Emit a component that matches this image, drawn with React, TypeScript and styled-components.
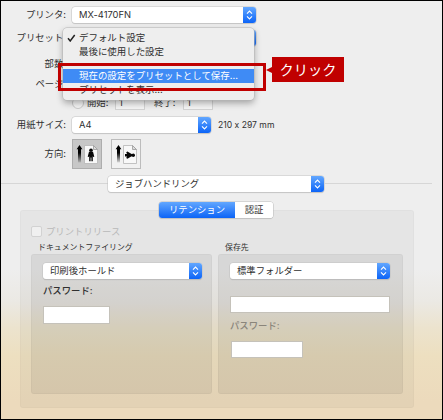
import React from "react";
import styled, { createGlobalStyle } from "styled-components";

const GlobalStyle = createGlobalStyle`
  * { box-sizing: border-box; }
  body { margin: 0; font-family: Inter, "Noto Sans CJK JP", sans-serif; font-size: 9.35px; line-height: 14px; font-feature-settings: "calt" 0; color: #303030; }
`;

const Frame = styled.main`
  position: relative;
  width: 443px;
  height: 420px;
  border: 1px solid #000;
  overflow: hidden;
  background: linear-gradient(#eeeeee 0, #eeeeee 268px, #ebe9e4 300px, #ece3cd 328px, #eddfc0 355px, #ecdabc 400px);
`;

const Form = styled.section`
  display: grid;
  grid-template-columns: 65px 1fr;
  column-gap: 6px;
  grid-template-rows: 28px 18px 34px 6px 31px 13px 46px;
  align-items: center;
  height: 174px;
`;

const Label = styled.span`
  display: block;
  text-align: right;
  white-space: nowrap;
`;

const Line = styled.div<{ $gap?: number }>`
  display: flex;
  align-items: center;
  gap: ${(p) => p.$gap ?? 0}px;
  white-space: nowrap;
`;

const SelectBox = styled.div<{ $w: number }>`
  display: flex;
  flex: none;
  align-items: stretch;
  width: ${(p) => p.$w}px;
  height: 16px;
  border-radius: 3px;
  background: #fff;
  box-shadow: 0 0 0 0.5px #c4c4c4, 0 1px 1px #0000002b;
  overflow: hidden;
`;

const SelectText = styled.span`
  flex: 1;
  padding-left: 7px;
  line-height: 16px;
  white-space: nowrap;
`;

const Stepper = styled.span`
  display: flex;
  align-items: center;
  justify-content: center;
  width: 13px;
  background: linear-gradient(#62a7ff, #0c64f7);
`;

const SelectField = ({ width, children }: { width: number; children?: React.ReactNode }) => (
  <SelectBox $w={width}>
    <SelectText>{children}</SelectText>
    <Stepper>
      <svg width="7" height="10" viewBox="0 0 7 10" fill="none" stroke="#fff" strokeWidth="1.1">
        <path d="M1 3.6 3.5 1 6 3.6M1 6.4 3.5 9 6 6.4" />
      </svg>
    </Stepper>
  </SelectBox>
);

const Input = styled.div<{ $w: number; $h: number }>`
  flex: none;
  width: ${(p) => p.$w}px;
  height: ${(p) => p.$h}px;
  padding-left: 3px;
  border: 1px solid #c5c2ba;
  background: #fff;
  line-height: 13px;
`;

const RangeInput = styled(Input)`
  background: #f5f5f5;
  border-color: #d3d3d3;
`;

const Radio = styled.span`
  width: 12px;
  height: 12px;
  border: 1px solid #c9c9c9;
  border-radius: 50%;
  background: #f6f6f6;
`;

const RangeLabel = styled.span<{ $w: number; $pad: number }>`
  width: ${(p) => p.$w}px;
  padding-left: ${(p) => p.$pad}px;
`;

const Size = styled.span`
  padding-left: 7px;
  font-size: 8.6px;
`;

const OrientButton = styled.span<{ $on?: boolean }>`
  width: 30px;
  height: 30px;
  border: 1px solid ${(p) => (p.$on ? "#adadad" : "#bcbcbc")};
  background: ${(p) => (p.$on ? "#c7c7c7" : "#f1f1f1")};
  svg { display: block; }
`;

const OrientationIcon = ({ sideways, id }: { sideways?: boolean; id: string }) => (
  <svg width="28" height="28" viewBox="0 0 28 28">
    <defs>
      <linearGradient id={id} x1="0" y1="0" x2="0" y2="1">
        <stop offset="0.45" stopColor="#000" />
        <stop offset="1" stopColor="#000" stopOpacity="0.1" />
      </linearGradient>
    </defs>
    <path d="M6.5 5 9.4 9.2H8V22.5H5V9.2H3.6Z" fill={`url(#${id})`} />
    <path d="M11.5 5.5H20.5L24.5 9.5V23.5H11.5Z" fill="#f8f8f8" stroke="#b5b5b5" strokeWidth=".8" />
    <path d="M20.5 5.5V9.5H24.5Z" fill="#ddd" stroke="#999" strokeWidth=".8" />
    {sideways ? (
      <g fill="#080808">
        <circle cx="21.3" cy="15.2" r="1.7" />
        <path d="M13 13.9H15L14.2 12.3 15.4 11.6 18.8 13.6 20.5 14.4V16L18.8 16.8 15.4 18.8 14.2 18.1 15 16.5H13Z" />
      </g>
    ) : (
      <g fill="#080808">
        <circle cx="18" cy="10.2" r="1.8" />
        <path d="M16 11.8H20L21.3 16.8 20.3 17.1 19.8 16V21.2H18.4V17.5H17.6V21.2H16.2V16L15.7 17.1 14.7 16.8Z" />
      </g>
    )}
  </svg>
);

const SectionLine = styled.div`
  display: flex;
  align-items: center;
  height: 17px;
  padding-right: 10px;
`;

const Rule = styled.span<{ $w?: number }>`
  flex: ${(p) => (p.$w ? `0 0 ${p.$w}px` : "1")};
  height: 1px;
  background: #d6d6d6;
`;

const Tabs = styled.div`
  position: relative;
  z-index: 1;
  display: flex;
  width: 114px;
  height: 16px;
  margin: 10px 0 0 158px;
  border-radius: 3px;
  overflow: hidden;
  background: #fff;
  box-shadow: 0 0 0 0.5px #bbb, 0 1px 1px #0002;
`;

const Tab = styled.span<{ $on?: boolean }>`
  flex: 0 0 ${(p) => (p.$on ? 76 : 38)}px;
  text-align: center;
  line-height: 16px;
  white-space: nowrap;
  color: ${(p) => (p.$on ? "#fff" : "#303030")};
  background: ${(p) => (p.$on ? "linear-gradient(#62a7ff, #0c64f7)" : "#fff")};
`;

const Group = styled.section`
  width: 394px;
  height: 198px;
  margin: -8px 0 0 19px;
  padding: 15px 10px 0;
  border: 1px solid rgba(0, 0, 0, 0.025);
  border-radius: 3px;
  background: rgba(0, 0, 0, 0.034);
`;

const CheckRow = styled.div`
  display: flex;
  align-items: center;
  gap: 4px;
  height: 11px;
  color: #b9b9b9;
`;

const Checkbox = styled.span`
  width: 11px;
  height: 11px;
  border: 1px solid #d2d2d2;
  border-radius: 2px;
  background: #f0f0f0;
`;

const Columns = styled.div`
  display: grid;
  grid-template-columns: 181px 185px;
  column-gap: 6px;
  margin-top: 4px;
`;

const Caption = styled.div`
  height: 13px;
  padding-left: 7px;
  font-size: 7.9px;
  line-height: 13px;
  white-space: nowrap;
`;

const Panel = styled.div`
  height: 140px;
  padding: 8px 0 0 11px;
  border: 1px solid rgba(0, 0, 0, 0.03);
  border-radius: 3px;
  background: rgba(0, 0, 0, 0.057);
`;

const PasswordLabel = styled.div<{ $muted?: boolean }>`
  height: 14px;
  margin: ${(p) => (p.$muted ? "6px 0 8px" : "5px 0 8px")};
  color: ${(p) => (p.$muted ? "#8a857b" : "#303030")};
  font-weight: 500;
`;

const FolderInput = styled(Input)`
  margin-top: 17px;
`;

const PinInput = styled(Input)`
  margin-left: 1px;
`;

const Menu = styled.div`
  position: absolute;
  left: 62px;
  top: 27px;
  width: 191px;
  height: 72px;
  padding-top: 3px;
  border-radius: 4px;
  background: #eeeeee;
  box-shadow: 0 0 0 0.5px #b5b5b5, 0 3px 7px #0005;
`;

const MenuItem = styled.div<{ $active?: boolean; $top?: number }>`
  display: flex;
  height: 14px;
  margin-top: ${(p) => p.$top ?? 0}px;
  font-size: 9.45px;
  line-height: 13px;
  white-space: nowrap;
  color: ${(p) => (p.$active ? "#fff" : "#303030")};
  background: ${(p) => (p.$active ? "#3f8bf5" : "transparent")};
`;

const Mark = styled.span`
  width: 16px;
  padding: 3px 0 0 4px;
  svg { display: block; }
`;

const Highlight = styled.div`
  position: absolute;
  left: 57px;
  top: 62px;
  width: 208px;
  height: 28px;
  border: 3px solid #c00000;
`;

const Callout = styled.div`
  position: absolute;
  left: 271px;
  top: 56px;
  width: 72px;
  height: 25px;
  background: #c00000;
  color: #fff;
  font: 14.2px/25px "Noto Sans CJK JP", sans-serif;
  text-align: center;
  &::before {
    content: "";
    position: absolute;
    right: 100%;
    top: 10px;
    border: solid transparent;
    border-width: 3.5px 6px 3.5px 0;
    border-right-color: #c00000;
  }
`;

export default function App() {
  return (
    <>
      <GlobalStyle />
      <Frame lang="ja">
        <Form>
          <Label>プリンタ:</Label>
          <SelectField width={184}>MX-4170FN</SelectField>
          <Label>プリセット:</Label>
          <SelectField width={184} />
          <Label>部数:</Label>
          <span />
          <Label>ページ:</Label>
          <span />
          <span />
          <Line>
            <Radio />
            <RangeLabel $w={31} $pad={3}>開始:</RangeLabel>
            <RangeInput $w={30} $h={15}>1</RangeInput>
            <RangeLabel $w={38} $pad={9}>終了:</RangeLabel>
            <RangeInput $w={30} $h={15}>1</RangeInput>
          </Line>
          <Label>用紙サイズ:</Label>
          <Line>
            <SelectField width={139}>A4</SelectField>
            <Size>210 x 297 mm</Size>
          </Line>
          <Label>方向:</Label>
          <Line $gap={9}>
            <OrientButton $on><OrientationIcon id="portrait" /></OrientButton>
            <OrientButton><OrientationIcon id="landscape" sideways /></OrientButton>
          </Line>
        </Form>
        <SectionLine>
          <Rule $w={107} />
          <SelectField width={216}>ジョブハンドリング</SelectField>
          <Rule />
        </SectionLine>
        <Tabs>
          <Tab $on>リテンション</Tab>
          <Tab>認証</Tab>
        </Tabs>
        <Group>
          <CheckRow><Checkbox />プリントリリース</CheckRow>
          <Columns>
            <div>
              <Caption>ドキュメントファイリング</Caption>
              <Panel>
                <SelectField width={159}>印刷後ホールド</SelectField>
                <PasswordLabel>パスワード:</PasswordLabel>
                <Input $w={67} $h={18} />
              </Panel>
            </div>
            <div>
              <Caption>保存先</Caption>
              <Panel>
                <SelectField width={160}>標準フォルダー</SelectField>
                <FolderInput $w={160} $h={17} />
                <PasswordLabel $muted>パスワード:</PasswordLabel>
                <PinInput $w={72} $h={17} />
              </Panel>
            </div>
          </Columns>
        </Group>
        <Menu>
          <MenuItem>
            <Mark>
              <svg width="9" height="8" viewBox="0 0 9 8" fill="none" stroke="#222" strokeWidth="1.5">
                <path d="M1 4.3 3.2 7 7.7 1" />
              </svg>
            </Mark>
            デフォルト設定
          </MenuItem>
          <MenuItem><Mark />最後に使用した設定</MenuItem>
          <MenuItem $active $top={10}><Mark />現在の設定をプリセットとして保存...</MenuItem>
          <MenuItem><Mark />プリセットを表示...</MenuItem>
        </Menu>
        <Highlight />
        <Callout>クリック</Callout>
      </Frame>
    </>
  );
}
